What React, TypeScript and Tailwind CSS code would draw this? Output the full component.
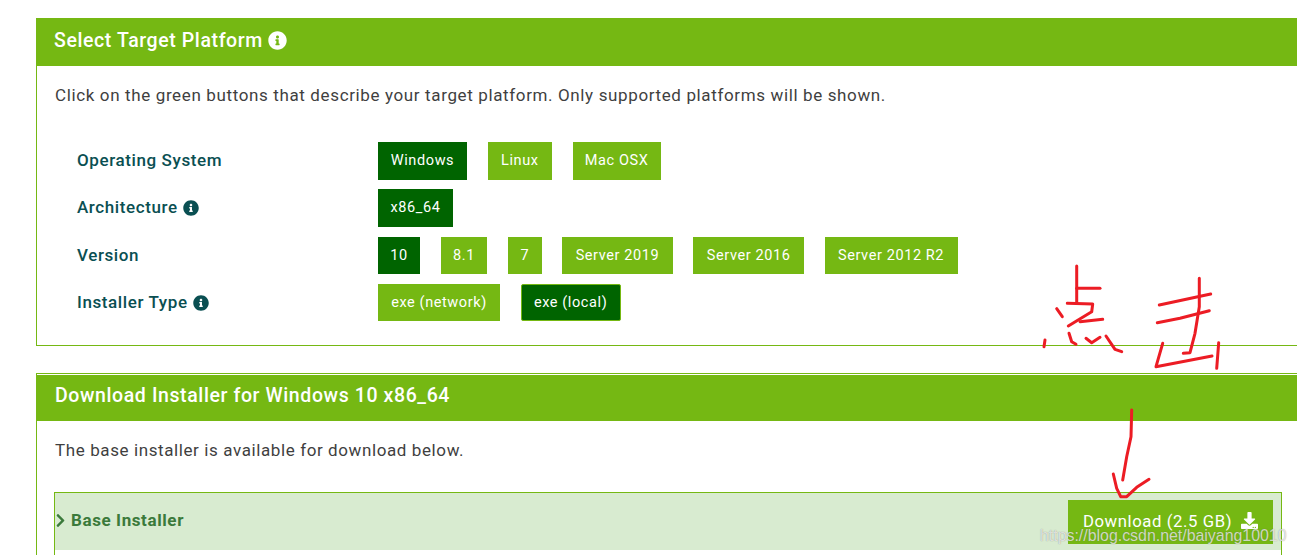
import { FaInfoCircle, FaDownload, FaChevronRight } from "react-icons/fa";

const ROWS = [
  {
    label: "Operating System",
    info: false,
    options: [
      { name: "Windows", on: true, w: "w-[89px]" },
      { name: "Linux", w: "w-[64.4px]" },
      { name: "Mac OSX", w: "w-[88px]" },
    ],
  },
  { label: "Architecture", info: true, options: [{ name: "x86_64", on: true, w: "w-[75px]" }] },
  {
    label: "Version",
    info: false,
    options: [
      { name: "10", on: true, w: "w-[42px]" },
      { name: "8.1", w: "w-[46.8px]" },
      { name: "7", w: "w-[33.6px]" },
      { name: "Server 2019", w: "w-[110.6px]" },
      { name: "Server 2016", w: "w-[110.6px]" },
      { name: "Server 2012 R2", w: "w-[133px]" },
    ],
  },
  {
    label: "Installer Type",
    info: true,
    options: [
      { name: "exe (network)", w: "w-[122px]" },
      { name: "exe (local)", on: true, outline: true, w: "w-[100px]" },
    ],
  },
];

// hand-drawn red annotation, traced from the screenshot
const STROKES = [
  "M1076.7 266V303",
  "M1076.7 288.3H1100",
  "M1067.3 303.3L1092.7 304L1091.7 311.7L1068.3 326",
  "M1080 321.7L1102.7 319.3",
  "M1056.7 308.7L1062.3 316.7",
  "M1045 340L1044 346.7",
  "M1069 333.3L1071.7 341.7L1076 344.3",
  "M1086 338.3L1091.7 342.7L1100 337.3",
  "M1106 336L1115 349.3L1121.7 351.7",
  "M1159.3 305L1210.7 294",
  "M1157.3 322.7L1180 318.3L1209.3 310.7",
  "M1199.3 278.3V306.7L1195 333.3L1190 352.7L1183.3 353.3",
  "M1162.7 343.3L1156 366.7L1212 356",
  "M1218.7 342.7L1216.7 368.3",
  "M1131.7 410L1131 436.7L1126.7 456.7L1122.7 480",
  "M1113.3 474L1116.7 488.3L1120.7 496.7L1126.7 496.7L1136.7 487.3L1149 479.3",
];

export default function App() {
  return (
    <div className="relative h-[555px] w-[1297px] overflow-hidden bg-white pl-9 pt-[18px] font-['Roboto',sans-serif] tracking-[0.6px]">
      <section className="h-[328px] w-[1290px] border-b border-l border-[#75b813]">
        <h2 className="-ml-px flex h-12 items-center gap-[5px] bg-[#75b813] pb-[3px] pl-[18px] text-[19.5px] font-medium text-white">
          Select Target Platform <FaInfoCircle className="text-[19px]" />
        </h2>
        <p className="mt-[17px] pl-[18px] text-[17px] leading-6 tracking-[0.63px] text-[#3f3f3f]">
          Click on the green buttons that describe your target platform. Only supported platforms will be shown.
        </p>
        <div className="mt-[35px] flex flex-col gap-[9.83px] pl-[40px]">
          {ROWS.map((row) => (
            <div key={row.label} className="flex h-[37.5px] items-center">
              <div className="flex w-[301px] items-center gap-[5px] text-[17px] font-medium text-[#0a4f52]">
                {row.label}
                {row.info && <FaInfoCircle className="text-[16px]" />}
              </div>
              <div className="flex h-full gap-[20.6px]">
                {row.options.map((o) => (
                  <div
                    key={o.name}
                    className={`flex items-center justify-center text-[14.5px] text-white ${o.w} ${o.on ? "bg-[#006400]" : "bg-[#75b813]"} ${o.outline ? "rounded-[2px] border border-[#75b813]" : ""}`}
                  >
                    {o.name}
                  </div>
                ))}
              </div>
            </div>
          ))}
        </div>
      </section>

      <section className="mt-[27px] h-[300px] w-[1290px] border-l border-t border-[#75b813] pt-px">
        <h2 className="-ml-px flex h-[46px] items-center bg-[#75b813] pb-1 pl-[19px] text-[19.5px] font-medium text-white">
          Download Installer for Windows 10 x86_64
        </h2>
        <p className="mt-[17px] pl-[18px] text-[17px] leading-6 text-[#3f3f3f]">
          The base installer is available for download below.
        </p>
        <div className="ml-[17px] mt-[30px] h-[80px] w-[1228px] border border-[#75b813]">
          <div className="flex h-[57px] items-center justify-between bg-[#d8ebd0] pr-[8px]">
            <div className="-ml-[2px] flex items-center gap-[3px] pb-[2px] text-[17px] font-bold text-[#3b7a3b]">
              <FaChevronRight className="text-[15px]" />
              Base Installer
            </div>
            <div className="flex h-11 w-[205px] items-center justify-center gap-[9px] bg-[#75b813] pt-px text-[16.7px] text-white">
              Download (2.5 GB) <FaDownload className="-mt-[3px] text-[17px]" />
            </div>
          </div>
        </div>
      </section>

      <svg className="pointer-events-none absolute left-0 top-0" width="1297" height="555" fill="none" stroke="#ec1c24" strokeWidth="3" strokeLinecap="round" strokeLinejoin="round">
        {STROKES.map((d) => (
          <path key={d} d={d} />
        ))}
      </svg>

      <span className="absolute left-[1040px] top-[526px] font-['Liberation_Sans',sans-serif] text-[15.9px] leading-5 tracking-normal text-white/70 [text-shadow:0_0_1px_rgba(80,80,80,0.6)]">
        https://blog.csdn.net/baiyang10010
      </span>
    </div>
  );
}
